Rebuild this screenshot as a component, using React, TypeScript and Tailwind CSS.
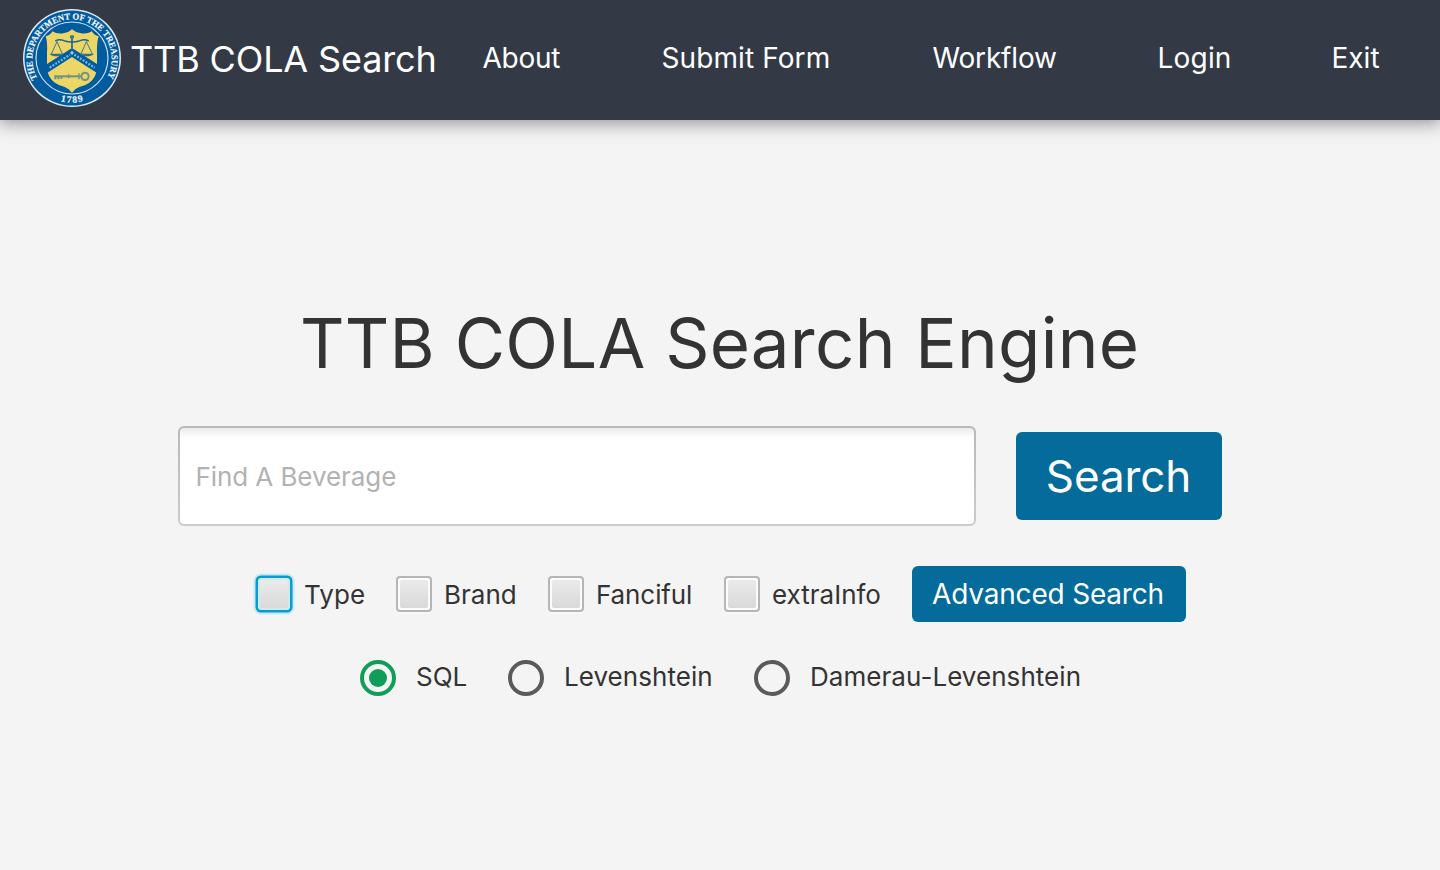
import type { ReactNode } from "react";

function TreasurySeal() {
  return (
    <svg viewBox="0 0 336 324" className="h-[108px] w-[112px] shrink-0" aria-hidden="true">
      <defs>
        <path id="seal-top" d="M 64 223 A 119 119 0 1 1 275 218" fill="none" />
        <path id="seal-bottom" d="M 100 278 A 136 136 0 0 0 236 278" fill="none" />
      </defs>
      <circle cx="168" cy="162" r="147" fill="#dfeaf3" />
      <circle cx="168" cy="162" r="142.5" fill="#005b9f" />
      <circle cx="168" cy="162" r="108" fill="#005b9f" stroke="#cfe0ee" strokeWidth="3.5" />
      <g fill="#f4f8fb" stroke="#f4f8fb" strokeWidth="0.5" fontFamily="Liberation Serif, serif" fontWeight="bold">
        <text fontSize="27">
          <textPath href="#seal-top" textLength="490" lengthAdjust="spacingAndGlyphs">
            THE DEPARTMENT OF THE TREASURY
          </textPath>
        </text>
        <text fontSize="29" textAnchor="middle" letterSpacing="3.5">
          <textPath href="#seal-bottom" startOffset="51%">1789</textPath>
        </text>
      </g>
      <path
        d="M89 97 Q104 94 109 82 Q125 92 145 87 Q159 85 168 76 Q178 85 192 87 Q211 92 228 82 Q233 94 248 97 Q242 116 243 145 L243 190 Q242 221 220 236 Q208 245 190 249 Q176 254 168 266 Q160 254 146 249 Q129 245 117 236 Q94 221 93 190 L93 145 Q95 116 89 97 Z"
        fill="#ecd666"
      />
      <path d="M93 180 L168 132 L243 180 L243 207 L168 159 L93 207 Z" fill="#005b9f" />
      <path d="M101 191 L162 152" stroke="#72b4dd" strokeWidth="7" strokeDasharray="6 4" />
      <path d="M175 152 L236 191" stroke="#72b4dd" strokeWidth="7" strokeDasharray="6 4" />
      <path d="M162 146 l6 -6 l6 6 l-6 7 Z" fill="#9ccbe8" />
      <g fill="none" stroke="#1c6594" strokeWidth="3">
        <path d="M118 111 Q130 104 144 110 Q168 118 192 110 Q206 104 218 111" strokeWidth="4.5" />
        <path d="M168 97 V132" strokeWidth="5" />
        <path d="M123 113 L106 150 M123 113 L139 150 M211 113 L195 150 M211 113 L229 150" strokeWidth="2.5" />
      </g>
      <path
        d="M101 149 H143 Q137 157 122 157 Q107 157 101 149 Z M192 149 H234 Q227 157 212 157 Q197 157 192 149 Z"
        fill="#2f6f93"
      />
      <path d="M162 94 h12 v9 h-12 Z" fill="#3d7690" />
      <g fill="none" stroke="#6f9188">
        <path d="M117 217 H197" strokeWidth="6" />
        <path d="M118 214 V226 M127 217 V226 M136 217 V225" strokeWidth="6" />
        <circle cx="207" cy="217" r="11" strokeWidth="6" />
        <path d="M189 208 V226 M158 211 V223" strokeWidth="4" />
      </g>
    </svg>
  );
}

function CheckOption({ label, focused, className }: { label: string; focused?: boolean; className: string }) {
  return (
    <label className={`flex shrink-0 items-center ${className}`}>
      <span
        className={
          focused
            ? "h-9 w-9 shrink-0 rounded-[5px] border-2 border-[#039ed3] bg-[#d5e8ee] p-[2px] shadow-[0_0_0_0.5px_#039ed3,0_0_0_2.5px_#d0e6ee]"
            : "h-9 w-9 shrink-0 rounded-[4px] border-2 border-[#b5b5b5] bg-[#fbfbfb] p-[2px] shadow-[0_2px_0_#fafafa]"
        }
      >
        <span className="block h-full w-full rounded-[2px] bg-linear-to-b from-[#ebebeb] to-[#d9d9d9]" />
      </span>
      <span className="pt-px pl-3">{label}</span>
    </label>
  );
}

function RadioOption({ children, selected, className }: { children: ReactNode; selected?: boolean; className: string }) {
  return (
    <label className={`flex shrink-0 items-center ${className}`}>
      <span
        className={`mt-[2px] flex h-9 w-9 shrink-0 items-center justify-center rounded-full border-4 ${
          selected ? "border-[#0f9d58]" : "border-[#5a5a5a]"
        }`}
      >
        {selected && <span className="h-[18px] w-[18px] rounded-full bg-[#0f9d58]" />}
      </span>
      {children}
    </label>
  );
}

export default function App() {
  return (
    <div className="flex h-[870px] w-[1440px] flex-col overflow-hidden bg-[#f4f4f4] font-['Inter',sans-serif] text-[26px] leading-8 whitespace-nowrap text-[#333333]">
      <header className="flex h-[120px] shrink-0 bg-[#333a46] pt-1 pl-4 text-white shadow-[0_0_18px_2px_rgba(0,0,0,0.45)]">
        <TreasurySeal />
        <h1 className="w-[354.5px] pt-[31px] pl-[2px] text-[36px] leading-[48px] tracking-[-0.14px]">TTB COLA Search</h1>
        <nav className="flex pt-[38px] text-[28px]">
          <a className="w-[179px] tracking-[-0.25px]">About</a>
          <a className="w-[271px] tracking-[0.1px]">Submit Form</a>
          <a className="w-[225px] tracking-[-0.17px]">Workflow</a>
          <a className="w-[174px] tracking-[0.2px]">Login</a>
          <a>Exit</a>
        </nav>
      </header>

      <main className="flex flex-col">
        <h2 className="mt-[183px] pl-[300px] text-[69px] leading-20 tracking-[0.26px]">TTB COLA Search Engine</h2>

        <div className="mt-[43px] flex items-center pl-[178px]">
          <div className="h-[100px] w-[798px] rounded-[6px] bg-linear-to-b from-[#b8b8b8] to-[#cccccc] p-[2px]">
            <div className="flex h-full items-center rounded-[4px] bg-white bg-linear-to-b from-[#ebebeb] via-white via-[10px] to-white pt-[2px] pl-[15.5px] tracking-[-0.08px] text-[#b2b2b2]">
              Find A Beverage
            </div>
          </div>
          <button className="ml-10 h-[88px] w-[206px] rounded-[6px] bg-[#056b9a] pr-px text-[44px] tracking-[-0.1px] text-white">
            Search
          </button>
        </div>

        <div className="mt-10 flex h-14 items-center pl-[256px]">
          <CheckOption focused label="Type" className="w-[140px] tracking-[0.1px]" />
          <CheckOption label="Brand" className="w-[152px]" />
          <CheckOption label="Fanciful" className="w-[176px] tracking-[-0.1px]" />
          <CheckOption label="extraInfo" className="w-[188px]" />
          <button className="h-14 w-[274px] rounded-[6px] bg-[#056b9a] pr-[2px] text-[28px] tracking-[-0.19px] text-white">
            Advanced Search
          </button>
        </div>

        <div className="mt-[37px] flex h-9 items-center pl-[360px]">
          <RadioOption selected className="w-[148px]">
            <span className="pl-5">SQL</span>
          </RadioOption>
          <RadioOption className="w-[246px]">
            <span className="pl-5 tracking-[0.05px]">Levenshtein</span>
          </RadioOption>
          <RadioOption className="w-[330px]">
            <span className="pl-5 tracking-[0.05px]">Damerau-Levenshtein</span>
          </RadioOption>
        </div>
      </main>
    </div>
  );
}
